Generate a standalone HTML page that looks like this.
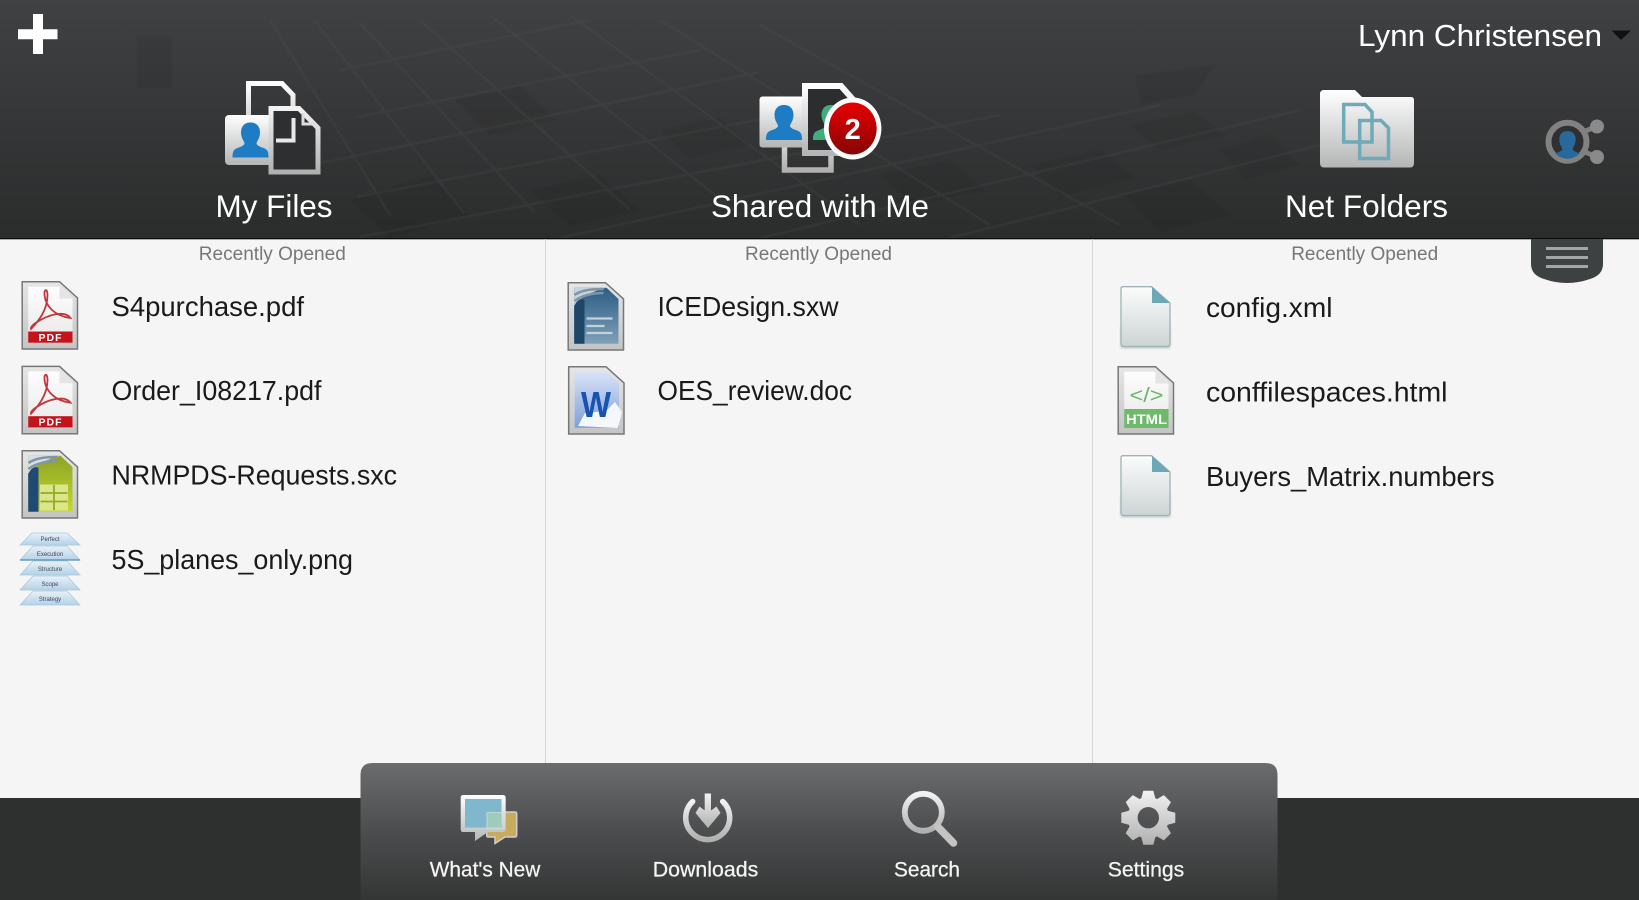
<!DOCTYPE html>
<html>
<head>
<meta charset="utf-8">
<title>Files</title>
<style>
html,body{margin:0;padding:0;width:1639px;height:900px;overflow:hidden;background:#f5f5f5}
svg{display:block}
text{font-family:"Liberation Sans",Arial,sans-serif}
</style>
</head>
<body>
<svg xmlns="http://www.w3.org/2000/svg" width="1639" height="900" viewBox="0 0 1639 900">
<defs>
<linearGradient id="hdr" x1="0" y1="0" x2="0" y2="1"><stop offset="0" stop-color="#404143"/><stop offset="1" stop-color="#2b2c2c"/></linearGradient>
<linearGradient id="panel" x1="0" y1="0" x2="0" y2="1"><stop offset="0" stop-color="#6b6c6e"/><stop offset=".5" stop-color="#4c4d4e"/><stop offset="1" stop-color="#343535"/></linearGradient>
<linearGradient id="metal" x1="0" y1="0" x2="0" y2="1"><stop offset="0" stop-color="#ffffff"/><stop offset="1" stop-color="#b4b5b5"/></linearGradient>
<linearGradient id="metal2" x1="0" y1="0" x2="0" y2="1"><stop offset="0" stop-color="#f2f2f2"/><stop offset="1" stop-color="#b0b0b0"/></linearGradient>
<linearGradient id="red" x1="0" y1="0" x2="0" y2="1"><stop offset="0" stop-color="#e80000"/><stop offset="1" stop-color="#860505"/></linearGradient>
<linearGradient id="frame" x1="0" y1="0" x2="0" y2="1"><stop offset="0" stop-color="#e6e6e6"/><stop offset="1" stop-color="#c4c4c4"/></linearGradient>
<linearGradient id="inner" x1="0" y1="0" x2="0" y2="1"><stop offset="0" stop-color="#fdfdfd"/><stop offset="1" stop-color="#e8e8e8"/></linearGradient>
<linearGradient id="plain" x1="0" y1="0" x2="0" y2="1"><stop offset="0" stop-color="#fbfcfc"/><stop offset="1" stop-color="#cdd4d4"/></linearGradient>
<linearGradient id="lime" x1="0" y1="0" x2="0" y2="1"><stop offset="0" stop-color="#8da426"/><stop offset="1" stop-color="#c5d82c"/></linearGradient>
<linearGradient id="navy" x1="0" y1="0" x2="0" y2="1"><stop offset="0" stop-color="#2c5c84"/><stop offset="1" stop-color="#7fa0b8"/></linearGradient>
<linearGradient id="wblue" x1="0" y1="0" x2="0" y2="1"><stop offset="0" stop-color="#d9e3f6"/><stop offset="1" stop-color="#7d9edd"/></linearGradient>
<linearGradient id="layer" x1="0" y1="0" x2="0" y2="1"><stop offset="0" stop-color="#e8f1f8"/><stop offset="1" stop-color="#b4d2e8"/></linearGradient>
<filter id="soft" x="-5%" y="-5%" width="110%" height="110%"><feGaussianBlur stdDeviation=".7"/></filter>
<filter id="sh" x="-20%" y="-20%" width="140%" height="140%"><feGaussianBlur stdDeviation="1.2"/></filter>
<clipPath id="socialClip"><circle cx="1567.5" cy="141.7" r="17"/></clipPath>
<path id="man" d="M18 0C25 0 27.500 5 27.500 10C27.500 15 25 18 24 20.500C24 23 27 24 31 25.500C35 27 36 29 36 35H0C0 29 1 27 5 25.500C9 24 12 23 12 20.500C11 18 8.500 15 8.500 10C8.500 5 11 0 18 0Z"/>
<g id="frm">
  <path d="M.7 .7H38L56 17V68H.7Z" fill="url(#frame)" stroke="#777" stroke-width="1.500"/>
</g>
<path id="inn" d="M6.700 5.700H39L51 17V61.700H6.700Z"/>
<g id="pdf">
  <use href="#frm"/>
  <use href="#inn" fill="url(#inner)"/>
  <path d="M38 5.700V17.500H51L39 5.700Z" fill="#e4e4e4"/>
  <path d="M9.500 48C16 41 26 30 26 14C26 7 22.500 8 23 14C24 25 33 35 49 37C44 30 29 32 14 42C10 45 9 47 9.500 48Z" fill="none" stroke="#c2383d" stroke-width="1.800"/>
  <rect x="6.700" y="50.500" width="44.300" height="11.200" fill="#c3141b"/>
  <text x="29" y="60" font-size="10.500" font-weight="700" fill="#fff" text-anchor="middle" letter-spacing="1">PDF</text>
</g>
<g id="plaindoc">
  <path d="M1.500 40H50.500V62H1.500Z" fill="#7d9195" opacity=".55" filter="url(#sh)"/>
  <path d="M1.500 2.500Q1.500 .7 3.500 .7H32L50.500 17V57.500Q50.500 60.500 47.500 60.500H4.500Q1.500 60.500 1.500 57.500Z" fill="url(#plain)" stroke="#9fb2b5" stroke-width="1.300"/>
  <path d="M32.500 .7L50.500 17H32.500Z" fill="#6ea8b6"/>
</g>
</defs>

<!-- header -->
<rect x="0" y="0" width="1639" height="239" fill="url(#hdr)"/>
<g fill="#000" opacity=".05" filter="url(#soft)">
  <path d="M137 36H172V88H137Z"/>
  <path d="M1030 165L1100 150L1135 178L1060 196Z"/>
  <path d="M1130 125L1195 112L1225 135L1160 150Z"/>
  <path d="M1125 195L1190 180L1230 215L1160 232Z"/>
  <path d="M1220 150L1270 135L1300 165L1245 180Z"/>
  <path d="M1135 75L1215 65L1195 95L1140 105Z"/>
  <path d="M350 200L430 175L470 215L390 238Z"/>
  <path d="M455 100L520 85L555 120L490 135Z"/>
  <path d="M530 190L600 175L640 210L570 226Z"/>
  <path d="M660 130L720 118L750 145L690 158Z"/>
  <path d="M880 175L950 160L985 190L915 205Z"/>
</g>
<g fill="none" stroke="#5c5d5f" stroke-width="2" opacity=".2" filter="url(#soft)">
  <path d="M270 20L390 215"/>
  <path d="M314 20L464 213"/>
  <path d="M360 23L535 213"/>
  <path d="M420 20L630 210"/>
  <path d="M490 15L740 215"/>
  <path d="M570 15L860 225"/>
  <path d="M660 20L990 225"/>
  <path d="M760 25L1120 225"/>
  <path d="M321 163L760 72"/>
  <path d="M357 117L700 50"/>
  <path d="M340 70L590 20"/>
  <path d="M357 197L860 100"/>
  <path d="M360 237L1000 115"/>
  <path d="M560 238L1160 105"/>
  <path d="M760 238L1300 110"/>
  <path d="M950 238L1380 130"/>
</g>
<rect x="0" y="238" width="1639" height="1.400" fill="#0c0c0c"/>

<!-- plus -->
<path d="M33 14H43V29.300H57.500V39.300H43V54H33V39.300H18V29.300H33Z" fill="#fff"/>

<!-- user -->
<text x="1358" y="46" font-size="31" fill="#fff" textLength="244" lengthAdjust="spacingAndGlyphs">Lynn Christensen</text>
<path d="M1611.500 30.500H1631L1621 40Z" fill="#111"/>

<!-- My Files icon -->
<path d="M248.500 143V83.500H282L293 95V140.500H272" fill="none" stroke="url(#metal)" stroke-width="5"/>
<rect x="225" y="115" width="50" height="50" rx="4" fill="url(#metal)"/>
<path d="M271 108.500H299L318 128V172H271Z" fill="#2e2f30" stroke="url(#metal2)" stroke-width="5"/>
<path d="M303 113V124H316" fill="none" stroke="#ddd" stroke-width="3"/>
<path d="M293.500 118V140.500H276" fill="none" stroke="#e8e8e8" stroke-width="4"/>
<use href="#man" transform="translate(232.500 122.500)" fill="#1d7cc4"/>
<text x="274" y="217" font-size="31.400" fill="#fff" text-anchor="middle" textLength="117" lengthAdjust="spacingAndGlyphs">My Files</text>

<!-- Shared icon -->
<path d="M784.500 140V170H831V125" fill="none" stroke="url(#metal2)" stroke-width="5.500"/>
<rect x="759.500" y="96.500" width="50" height="51" rx="3" fill="url(#metal)"/>
<path d="M805 86H841L857 104V153H805Z" fill="#2c2d2e" stroke="url(#metal)" stroke-width="6"/>
<use href="#man" transform="translate(766 105)" fill="#1d7cc4"/>
<use href="#man" transform="translate(813 105)" fill="#3fae7d"/>
<ellipse cx="852.700" cy="128.500" rx="28.700" ry="31" fill="#fff"/>
<ellipse cx="852.700" cy="128.500" rx="24" ry="26" fill="url(#red)"/>
<text x="852.700" y="139" font-size="29" font-weight="700" fill="#fff" text-anchor="middle">2</text>
<text x="820" y="217" font-size="31.400" fill="#fff" text-anchor="middle" textLength="218" lengthAdjust="spacingAndGlyphs">Shared with Me</text>

<!-- Net Folders icon -->
<path d="M1320 94Q1320 90 1324 90H1355L1362 97H1411Q1414 97 1414 100V163Q1414 167.500 1410 167.500H1324Q1320 167.500 1320 163Z" fill="url(#metal)"/>
<path d="M1343.700 142V104.500H1365L1372 112V142Z" fill="none" stroke="#6fa9ba" stroke-width="3.500"/>
<path d="M1359.700 158.500V120.500H1381L1388.500 128V158.500Z" fill="none" stroke="#6fa9ba" stroke-width="3.500"/>
<text x="1366.500" y="217" font-size="31.400" fill="#fff" text-anchor="middle" textLength="163" lengthAdjust="spacingAndGlyphs">Net Folders</text>

<!-- social icon -->
<path d="M1580 133L1597 126.500M1580 150L1597 157" stroke="#808080" stroke-width="5"/>
<circle cx="1597" cy="126.500" r="7" fill="#8a8a8a"/>
<circle cx="1597" cy="157" r="7" fill="#8a8a8a"/>
<circle cx="1567.500" cy="141.700" r="19" fill="#2f3031" stroke="#818181" stroke-width="6"/>
<g clip-path="url(#socialClip)"><use href="#man" transform="translate(1552 131) scale(.86)" fill="#26699a"/></g>

<!-- columns -->
<rect x="0" y="239.400" width="1639" height="559" fill="#f5f5f5"/>
<rect x="545" y="239" width="1" height="525" fill="#d6d6d6"/>
<rect x="1092" y="239" width="1" height="525" fill="#d6d6d6"/>
<rect x="0" y="798" width="1639" height="102" fill="#2e2f2f"/>

<g font-size="19" fill="#777" text-anchor="middle">
  <text x="272.300" y="260" textLength="147" lengthAdjust="spacingAndGlyphs">Recently Opened</text>
  <text x="818.500" y="260" textLength="147" lengthAdjust="spacingAndGlyphs">Recently Opened</text>
  <text x="1364.700" y="260" textLength="147" lengthAdjust="spacingAndGlyphs">Recently Opened</text>
</g>

<!-- drawer handle -->
<path d="M1531 239H1603V264Q1603 275 1590 279Q1567 287 1544 279Q1531 275 1531 264Z" fill="#3e4142"/>
<g fill="#a4a5a5">
  <rect x="1546" y="247" width="42" height="3"/>
  <rect x="1546" y="256" width="42" height="3"/>
  <rect x="1546" y="265" width="42" height="3"/>
</g>

<!-- file names -->
<g font-size="27.400" fill="#1a1a1a">
  <text x="111.500" y="316" textLength="192.500" lengthAdjust="spacingAndGlyphs">S4purchase.pdf</text>
  <text x="111.500" y="400" textLength="210" lengthAdjust="spacingAndGlyphs">Order_I08217.pdf</text>
  <text x="111.500" y="484.600" textLength="285.500" lengthAdjust="spacingAndGlyphs">NRMPDS-Requests.sxc</text>
  <text x="111.500" y="569.200" textLength="241.500" lengthAdjust="spacingAndGlyphs">5S_planes_only.png</text>
  <text x="657.500" y="316" textLength="181" lengthAdjust="spacingAndGlyphs">ICEDesign.sxw</text>
  <text x="657.500" y="400" textLength="194.500" lengthAdjust="spacingAndGlyphs">OES_review.doc</text>
  <text x="1206" y="317" textLength="126.500" lengthAdjust="spacingAndGlyphs">config.xml</text>
  <text x="1206" y="401.500" textLength="241.500" lengthAdjust="spacingAndGlyphs">conffilespaces.html</text>
  <text x="1206" y="486" textLength="288.500" lengthAdjust="spacingAndGlyphs">Buyers_Matrix.numbers</text>
</g>

<!-- file icons: col 1 -->
<use href="#pdf" transform="translate(21.500 281)"/>
<use href="#pdf" transform="translate(21.500 365.700)"/>
<g transform="translate(21.500 450)">
  <use href="#frm"/>
  <use href="#inn" fill="url(#lime)"/>
  <path d="M6.700 24C14 14 26 9 39 5.700H6.700Z" fill="#d8dfe2"/>
  <path d="M6.700 61.700V24C10 17 14 16 17 18V61.700Z" fill="#1f4a73"/>
  <path d="M7 13C14 8 24 7 36 7M7 19C15 13 25 11 36 11" stroke="#7f96a8" stroke-width="2.500" fill="none"/>
  <rect x="18.500" y="34.500" width="28" height="26" fill="#dbe68a"/>
  <path d="M19 43H46M19 51.500H46M32.500 35V60" stroke="#93ab22" stroke-width="1.800"/>
</g>
<g transform="translate(20 533)">
  <g fill="url(#layer)" stroke="#a9c7dc" stroke-width=".7">
    <path d="M13 58H47L60 72H0Z"/>
    <path d="M13 43H47L60 57H0Z"/>
    <path d="M13 28H47L60 42H0Z"/>
    <path d="M13 13H47L60 27H0Z"/>
    <path d="M12 0H47L60 12H0Z"/>
  </g>
  <path d="M0 27H60" stroke="#4f8ebc" stroke-width="1.200"/>
  <g font-size="6" fill="#445" text-anchor="middle">
    <text x="30" y="8">Perfect</text>
    <text x="30" y="23">Execution</text>
    <text x="30" y="38">Structure</text>
    <text x="30" y="53">Scope</text>
    <text x="30" y="68">Strategy</text>
  </g>
</g>

<!-- file icons: col 2 -->
<g transform="translate(567.500 282)">
  <use href="#frm"/>
  <use href="#inn" fill="url(#navy)"/>
  <path d="M6.700 24C14 14 26 9 39 5.700H6.700Z" fill="#c8d4dc"/>
  <path d="M6.700 61.700V24C10 17 14 16 17 18V61.700Z" fill="#1d4669"/>
  <path d="M7 13C14 8 24 7 36 7M7 19C15 13 25 11 36 11" stroke="#7f96a8" stroke-width="2.500" fill="none"/>
  <path d="M19 36.500H45M19 44H37M19 51H45" stroke="#c2d2dd" stroke-width="2.200"/>
</g>
<g transform="translate(568 366)">
  <use href="#frm"/>
  <use href="#inn" fill="url(#wblue)"/>
  <path d="M10 60L17 47L38 45L47 36L54 46L50 62Z" fill="#f5f7fb"/>
  <text x="28" y="51" font-size="36" font-weight="700" fill="#1754b0" text-anchor="middle" textLength="30" lengthAdjust="spacingAndGlyphs">W</text>
</g>

<!-- file icons: col 3 -->
<use href="#plaindoc" transform="translate(1119.500 286)"/>
<g transform="translate(1117.500 366)">
  <use href="#frm"/>
  <use href="#inn" fill="url(#inner)"/>
  <path d="M38 5.700V17.500H51L39 5.700Z" fill="#e4e4e4"/>
  <rect x="6.700" y="43" width="44.300" height="19" fill="#6dba69"/>
  <text x="29" y="36" font-size="20" fill="#66b765" text-anchor="middle" textLength="34" lengthAdjust="spacingAndGlyphs">&lt;/&gt;</text>
  <text x="29" y="58" font-size="13.500" font-weight="700" fill="#fff" text-anchor="middle" textLength="41" lengthAdjust="spacingAndGlyphs">HTML</text>
</g>
<use href="#plaindoc" transform="translate(1119.500 455)"/>

<!-- bottom panel -->
<path d="M360.500 900V775Q360.500 763 372.500 763H1265.500Q1277.500 763 1277.500 775V900Z" fill="url(#panel)"/>

<!-- what's new -->
<path d="M488 812H515Q516.700 812 516.700 814V835Q516.700 837 515 837H505L495 843.500V837H488Q486.700 837 486.700 835V814Q486.700 812 488 812Z" fill="#c9ab60" stroke="#cfcfcf" stroke-width="1.500"/>
<path d="M463 795H503Q505.700 795 505.700 798V829Q505.700 832 503 832H488L475 841V832H463Q460.700 832 460.700 829V798Q460.700 795 463 795Z" fill="url(#metal)"/>
<rect x="465" y="799" width="36.500" height="28.500" fill="#7fb8cc"/>
<rect x="487.500" y="813" width="14" height="14.500" fill="#9fcbbd"/>
<rect x="487" y="812.500" width="17" height="16" fill="none" stroke="#cfe0e0" stroke-width="1.200" opacity=".7"/>

<!-- downloads -->
<path d="M692.700 801.500A22 22 0 1 0 722.700 801.500" fill="none" stroke="url(#metal2)" stroke-width="5.500" stroke-linecap="round"/>
<path d="M704.700 793.500H711V810.500L716.500 806.500L720.500 813L708 828L695.500 813L699.500 806.500L704.700 810.500Z" fill="url(#metal2)"/>

<!-- search -->
<circle cx="923.300" cy="812.300" r="18.500" fill="none" stroke="url(#metal2)" stroke-width="5.800"/>
<path d="M938 827L953.500 843" stroke="#c4c4c4" stroke-width="7.500" stroke-linecap="round"/>

<!-- settings -->
<path transform="translate(1148.300 817.700)" fill="url(#metal2)" fill-rule="evenodd" d="M-7-19.500L-5-27H5L7-19.500L8.840-18.740L15.550-22.630L22.630-15.550L18.740-8.840L19.500-7L27-5V5L19.500 7L18.740 8.840L22.630 15.550L15.550 22.630L8.840 18.740L7 19.500L5 27H-5L-7 19.500L-8.840 18.740L-15.550 22.630L-22.630 15.550L-18.740 8.840L-19.500 7L-27 5V-5L-19.500-7L-18.740-8.840L-22.630-15.550L-15.550-22.630L-8.840-18.740ZM10.700 0A10.700 10.700 0 1 0-10.700 0A10.700 10.700 0 1 0 10.700 0Z"/>

<g font-size="21" fill="#f4f4f4" text-anchor="middle" stroke="#f4f4f4" stroke-width=".25">
  <text x="485" y="876.300" textLength="110.500" lengthAdjust="spacingAndGlyphs">What's New</text>
  <text x="705.500" y="876.300" textLength="105.500" lengthAdjust="spacingAndGlyphs">Downloads</text>
  <text x="927" y="876.300" textLength="66" lengthAdjust="spacingAndGlyphs">Search</text>
  <text x="1146" y="876.300" textLength="76.500" lengthAdjust="spacingAndGlyphs">Settings</text>
</g>
</svg>
</body>
</html>
